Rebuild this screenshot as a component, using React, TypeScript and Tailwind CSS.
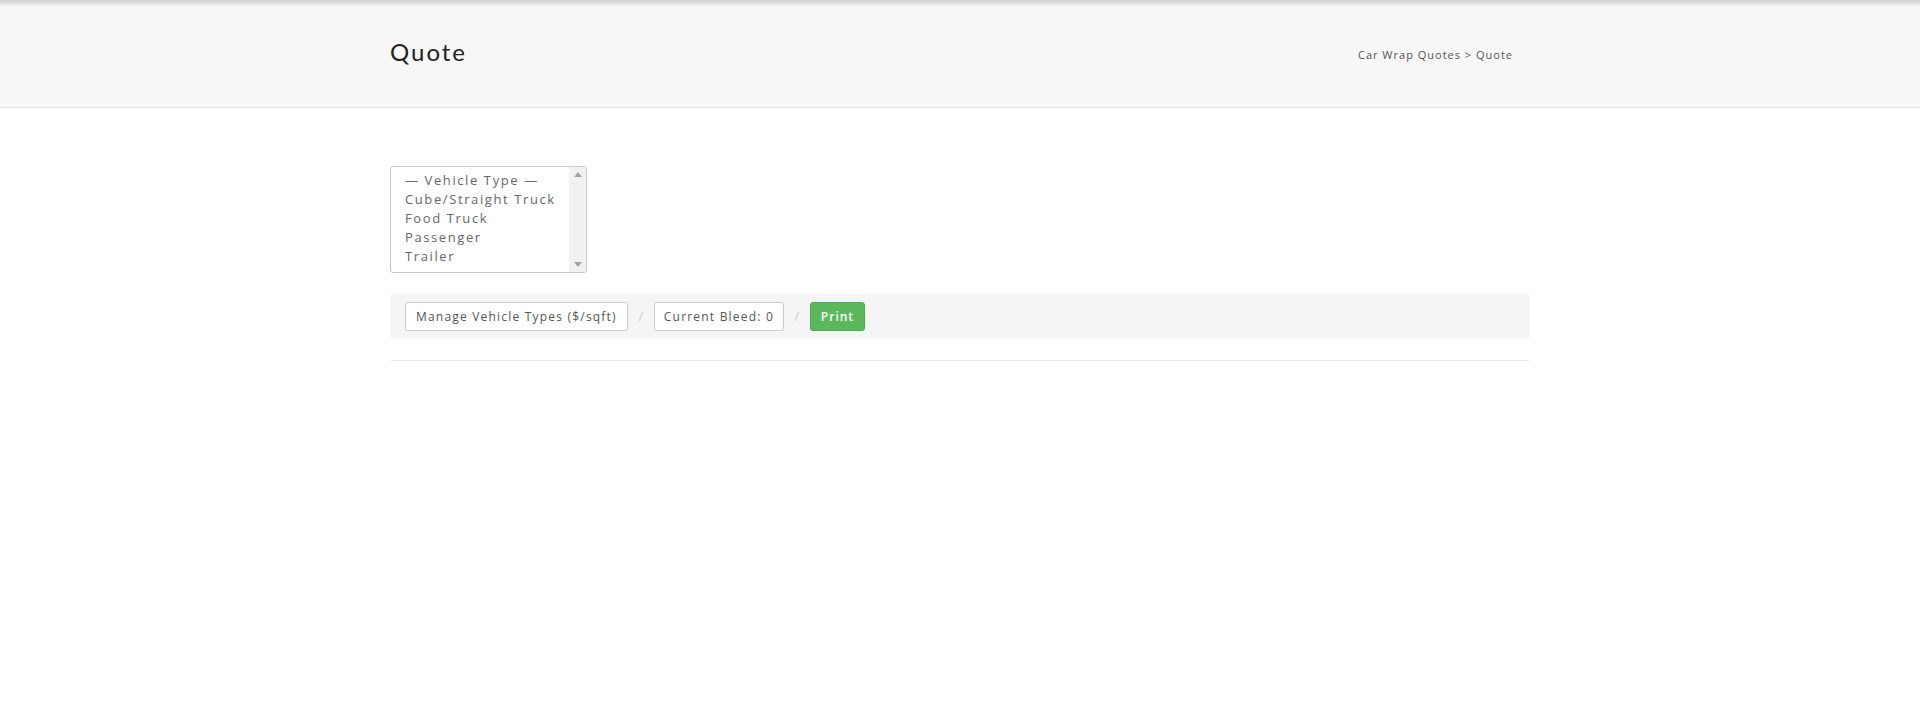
import React from "react";

const bodyFont = { fontFamily: '"Open Sans", "Liberation Sans", sans-serif' };

export default function App() {
  const options = ["— Vehicle Type —", "Cube/Straight Truck", "Food Truck", "Passenger", "Trailer"];
  return (
    <div className="min-h-[719px] bg-white" style={bodyFont}>
      <header className="relative h-[108px] bg-[#f7f7f7] border-b border-[#e6e6e6]">
        <div className="absolute inset-x-0 top-0 h-[7px] bg-gradient-to-b from-[#cfcfcf] to-[#f7f7f7]" />
        <div className="relative w-[1140px] mx-auto flex justify-between items-start pt-[37px]">
          <h1
            className="text-[24px] leading-[29px] tracking-[2px] text-[#222] font-normal"
            style={{ fontFamily: 'Lato, "Open Sans", sans-serif' }}
          >
            Quote
          </h1>
          <div className="mt-[10px] pr-[17px] text-[11px] leading-[15px] tracking-[1px] text-[#555]">
            Car Wrap Quotes &gt; Quote
          </div>
        </div>
      </header>

      <main className="w-[1140px] mx-auto pt-[58px]">
        <div className="w-[197px] h-[107px] border border-[#c8c8c8] rounded-[3px] flex overflow-hidden bg-white">
          <div className="flex-1 pl-[14px] pt-[4px]">
            {options.map((o) => (
              <div key={o} className="text-[13px] leading-[19px] tracking-[1.6px] text-[#666] whitespace-nowrap">
                {o}
              </div>
            ))}
          </div>
          <div className="w-[17px] bg-[#f1f1f1] flex flex-col justify-between items-center py-[5px]">
            <svg width="8" height="5" viewBox="0 0 8 5">
              <polygon points="4,0 8,5 0,5" fill="#a3a3a3" />
            </svg>
            <svg width="8" height="5" viewBox="0 0 8 5">
              <polygon points="0,0 8,0 4,5" fill="#a3a3a3" />
            </svg>
          </div>
        </div>

        <div className="mt-[21px] h-[45px] bg-[#f5f5f5] rounded-[4px] px-[15px] flex items-center">
          <button className="h-[29px] px-[10px] bg-white border border-[#cccccc] rounded-[2px] text-[12px] tracking-[1.2px] text-[#555]">
            Manage Vehicle Types ($/sqft)
          </button>
          <span className="w-[26px] text-center text-[13px] text-[#cccccc]">/</span>
          <button className="h-[29px] px-[9px] bg-white border border-[#cccccc] rounded-[2px] text-[12px] tracking-[1.2px] text-[#555]">
            Current Bleed: 0
          </button>
          <span className="w-[26px] text-center text-[13px] text-[#cccccc]">/</span>
          <button className="h-[29px] w-[55px] bg-[#5cb85c] border border-[#4cae4c] rounded-[3px] text-[12px] tracking-[1px] text-white font-semibold">
            Print
          </button>
        </div>

        <div className="mt-[21px] border-t border-[#eeeeee]" />
      </main>
    </div>
  );
}
